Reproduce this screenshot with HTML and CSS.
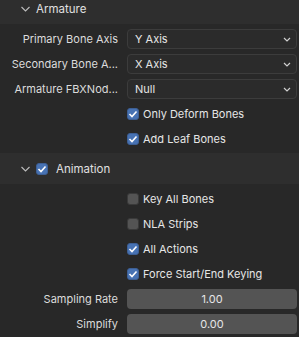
FILE: index.html
```html
<!DOCTYPE html>
<html lang="en">
<head>
    <meta charset="UTF-8">
    <title>FBX Export - Armature</title>
    <link rel="stylesheet" href="styles.css">
</head>
<body>
    <div class="panel">
        <div class="panel-header first">
            <svg class="chevron" width="9" height="6" viewBox="0 0 9 6"><path d="M0.5 1 L4.5 5 L8.5 1" fill="none" stroke="#bdbdbd" stroke-width="1.1"/></svg>
            <span class="title">Armature</span>
        </div>
        <div class="props">
            <div class="row">
                <label class="prop-label">Primary Bone Axis</label>
                <div class="dropdown"><span>Y Axis</span><svg width="8" height="5" viewBox="0 0 8 5"><path d="M1 1 L4 4 L7 1" fill="none" stroke="#d0d0d0" stroke-width="1.2"/></svg></div>
            </div>
            <div class="row">
                <label class="prop-label">Secondary Bone A...</label>
                <div class="dropdown"><span>X Axis</span><svg width="8" height="5" viewBox="0 0 8 5"><path d="M1 1 L4 4 L7 1" fill="none" stroke="#d0d0d0" stroke-width="1.2"/></svg></div>
            </div>
            <div class="row">
                <label class="prop-label">Armature FBXNod...</label>
                <div class="dropdown"><span>Null</span><svg width="8" height="5" viewBox="0 0 8 5"><path d="M1 1 L4 4 L7 1" fill="none" stroke="#d0d0d0" stroke-width="1.2"/></svg></div>
            </div>
            <div class="row">
                <span></span>
                <div class="check"><span class="box on"><svg width="10" height="8" viewBox="0 0 10 8"><path d="M1.5 4 L4 6.5 L8.5 1.5" fill="none" stroke="#fff" stroke-width="1.6"/></svg></span>Only Deform Bones</div>
            </div>
            <div class="row">
                <span></span>
                <div class="check"><span class="box on"><svg width="10" height="8" viewBox="0 0 10 8"><path d="M1.5 4 L4 6.5 L8.5 1.5" fill="none" stroke="#fff" stroke-width="1.6"/></svg></span>Add Leaf Bones</div>
            </div>
        </div>

        <div class="panel-header">
            <svg class="chevron" width="9" height="6" viewBox="0 0 9 6"><path d="M0.5 1 L4.5 5 L8.5 1" fill="none" stroke="#bdbdbd" stroke-width="1.1"/></svg>
            <span class="box on"><svg width="10" height="8" viewBox="0 0 10 8"><path d="M1.5 4 L4 6.5 L8.5 1.5" fill="none" stroke="#fff" stroke-width="1.6"/></svg></span>
            <span class="title">Animation</span>
        </div>
        <div class="props">
            <div class="row">
                <span></span>
                <div class="check"><span class="box"></span>Key All Bones</div>
            </div>
            <div class="row">
                <span></span>
                <div class="check"><span class="box"></span>NLA Strips</div>
            </div>
            <div class="row">
                <span></span>
                <div class="check"><span class="box on"><svg width="10" height="8" viewBox="0 0 10 8"><path d="M1.5 4 L4 6.5 L8.5 1.5" fill="none" stroke="#fff" stroke-width="1.6"/></svg></span>All Actions</div>
            </div>
            <div class="row">
                <span></span>
                <div class="check"><span class="box on"><svg width="10" height="8" viewBox="0 0 10 8"><path d="M1.5 4 L4 6.5 L8.5 1.5" fill="none" stroke="#fff" stroke-width="1.6"/></svg></span>Force Start/End Keying</div>
            </div>
            <div class="row">
                <label class="prop-label">Sampling Rate</label>
                <div class="number">1.00</div>
            </div>
            <div class="row">
                <label class="prop-label">Simplify</label>
                <div class="number">0.00</div>
            </div>
        </div>
    </div>
</body>
</html>
```
FILE: styles.css
```css
body {
    margin: 0;
    background-color: #282828;
    color: #e6e6e6;
    font-family: Inter, "Noto Sans", sans-serif;
    font-size: 11px;
    overflow: hidden;
}
.panel-header {
    height: 31px;
    display: flex;
    align-items: center;
    padding-left: 21px;
    background-color: #2e2e2e;
    color: #e0e0e0;
    font-size: 11.5px;
}
.panel-header.first {
    margin-top: -7px;
}
.panel-header .chevron {
    margin-right: 6px;
}
.panel-header .box {
    margin-right: 8px;
}
.props {
    display: flex;
    flex-direction: column;
    gap: 5px;
    padding: 5px 2px 4px 0;
}
.row {
    display: grid;
    grid-template-columns: 127px 1fr;
    height: 20px;
    align-items: center;
}
.prop-label {
    text-align: right;
    padding-right: 9px;
    color: #dcdcdc;
    white-space: nowrap;
}
.dropdown {
    height: 18px;
    border: 1px solid #3c3c3c;
    border-radius: 4px;
    background-color: #2b2b2b;
    display: flex;
    align-items: center;
    justify-content: space-between;
    padding: 0 5px 0 7px;
}
.check {
    display: flex;
    align-items: center;
    gap: 4px;
}
.box {
    width: 12px;
    height: 12px;
    box-sizing: border-box;
    border-radius: 3px;
    background-color: #545454;
    border: 1px solid #3a3a3a;
    display: flex;
    align-items: center;
    justify-content: center;
}
.box.on {
    background-color: #4772b3;
    border-color: #3d5f94;
}
.number {
    height: 20px;
    line-height: 20px;
    border-radius: 4px;
    background-color: #545454;
    text-align: center;
}
```
